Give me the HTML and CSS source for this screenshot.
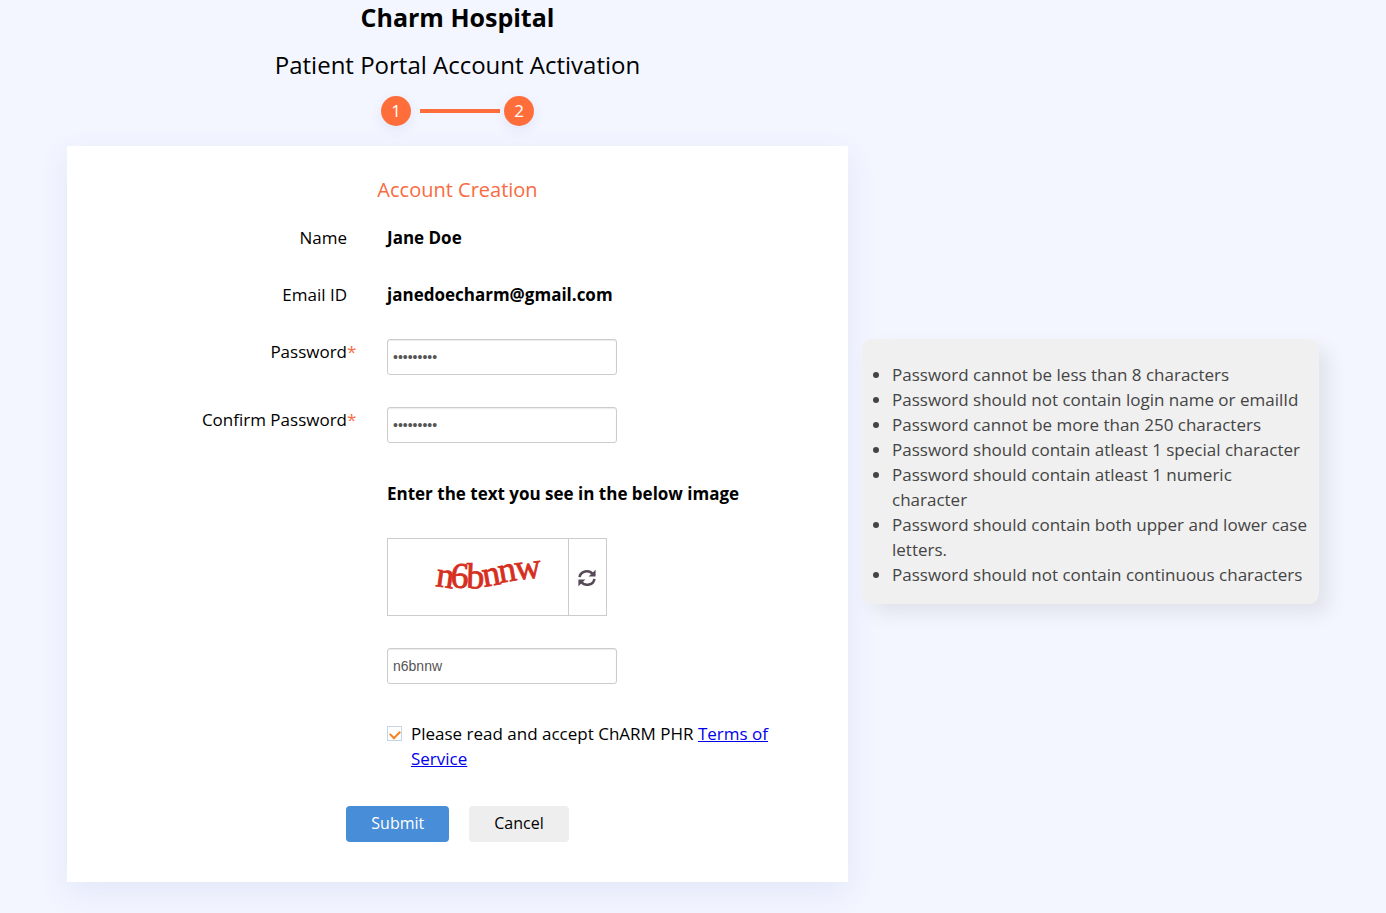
FILE: index.html
```html
<!DOCTYPE html>
<html lang="en">
<head>
  <meta charset="UTF-8">
  <meta name="viewport" content="width=device-width, initial-scale=1.0">
  <title>Patient Portal Account Activation</title>
  <link rel="stylesheet" href="styles.css">
</head>
<body>
  <div class="container">
    <main class="activation">
      <h1>Charm Hospital</h1>
      <h2>Patient Portal Account Activation</h2>
      <div class="steps">
        <span class="step">1</span>
        <span class="step-line"></span>
        <span class="step">2</span>
      </div>

      <form class="card">
        <h3>Account Creation</h3>
        <div class="row">
          <span class="label">Name<span class="mark"></span></span>
          <strong>Jane Doe</strong>
        </div>
        <div class="row">
          <span class="label">Email ID<span class="mark"></span></span>
          <strong>janedoecharm@gmail.com</strong>
        </div>
        <div class="row">
          <label class="label" for="password">Password<span class="mark">*</span></label>
          <input class="text-box" type="password" id="password" value="Charm@123">
        </div>
        <div class="row">
          <label class="label" for="confirm-password">Confirm Password<span class="mark">*</span></label>
          <input class="text-box" type="password" id="confirm-password" value="Charm@123">
        </div>
        <div class="row">
          <label class="field caption" for="captcha-text">Enter the text you see in the below image</label>
        </div>
        <div class="row">
          <div class="field captcha">
            <svg class="captcha-image" width="180" height="76" viewBox="0 0 180 76" role="img" aria-label="n6bnnw">
              <text x="47 62 78 96 112 128" y="47 48 49 48 44 41" rotate="8 4 2 -10 -10 -6">n6bnnw</text>
            </svg>
            <button class="refresh" type="button" aria-label="Refresh image">
              <svg width="18" height="18" viewBox="0 0 18 18">
                <path class="arc" d="M1.6 8.2A7.2 6.6 0 0 1 14.6 5M16.4 9.8A7.2 6.6 0 0 1 3.4 13"/>
                <path class="head" d="M17.6 0.8V7.6H10.6zM0.4 17.2V10.4H7.4z"/>
              </svg>
            </button>
          </div>
        </div>
        <div class="row">
          <input class="field text-box" type="text" id="captcha-text" value="n6bnnw">
        </div>
        <div class="row">
          <div class="field terms">
            <input type="checkbox" id="terms" checked>
            <label for="terms">Please read and accept ChARM PHR <a href="#">Terms of Service</a></label>
          </div>
        </div>
        <div class="buttons">
          <button class="btn submit" type="submit">Submit</button>
          <button class="btn cancel" type="button">Cancel</button>
        </div>
      </form>
    </main>

    <aside class="rules">
      <ul>
        <li>Password cannot be less than 8 characters</li>
        <li>Password should not contain login name or emailId</li>
        <li>Password cannot be more than 250 characters</li>
        <li>Password should contain atleast 1 special character</li>
        <li>Password should contain atleast 1 numeric character</li>
        <li>Password should contain both upper and lower case letters.</li>
        <li>Password should not contain continuous characters</li>
      </ul>
    </aside>
  </div>
</body>
</html>
```
FILE: styles.css
```css
* {
  box-sizing: border-box;
}
body {
  margin: 0;
  background-color: #f3f6ff;
  color: #000;
  font-family: "Open Sans", sans-serif;
  font-size: 17px;
  line-height: 25px;
}
.container {
  display: grid;
  grid-template-columns: minmax(600px, 781px) minmax(300px, 457px);
  column-gap: 14px;
  align-items: start;
  padding: 0 20px 31px 67px;
}
h1,
h2,
h3 {
  margin: 0;
  text-align: center;
  font-weight: 400;
}
h1 {
  font-size: 25px;
  line-height: 34px;
  font-weight: 700;
}
h2 {
  margin-top: 13px;
  font-size: 24px;
  line-height: 36px;
}
.steps {
  display: flex;
  justify-content: center;
  align-items: center;
  margin: 13px 0 20px;
}
.step {
  width: 30px;
  height: 30px;
  border-radius: 50%;
  background-color: #ff6e3a;
  box-shadow: 0 4px 12px rgba(80, 80, 200, 0.1);
  color: #fff;
  line-height: 30px;
  text-align: center;
}
.step-line {
  width: 80px;
  height: 4px;
  margin: 0 4px 0 9px;
  background-color: #ff6e3a;
}
.card {
  padding: 29px 40px 40px 0;
  background-color: #fff;
  box-shadow: 0 10px 30px rgba(70, 80, 180, 0.09);
}
h3 {
  margin: 0 -40px 20px 0;
  color: #f96b3f;
  font-size: 20px;
  line-height: 30px;
}
.row {
  display: grid;
  grid-template-columns: 320px 1fr;
  margin-bottom: 32px;
}
.label {
  display: flex;
  justify-content: flex-end;
  padding-right: 30px;
}
.mark {
  width: 10px;
  color: #f96b3f;
}
.field {
  grid-column: 2;
}
.text-box {
  width: 230px;
  height: 36px;
  padding: 0 5px;
  border: 1px solid #ccc;
  border-radius: 3px;
  box-shadow: inset 0 1px 1px rgba(0, 0, 0, 0.08);
  color: #555;
  font-family: "Liberation Sans", sans-serif;
  font-size: 14px;
}
.caption {
  padding-top: 6px;
  font-weight: 700;
}
.captcha {
  display: flex;
  width: 220px;
  height: 78px;
  border: 1px solid #ccc;
}
.captcha-image {
  flex: none;
}
.captcha-image text {
  fill: #d62f20;
  stroke: #d62f20;
  stroke-width: 0.8;
  font-family: "Liberation Serif", serif;
  font-size: 36px;
}
.refresh {
  display: flex;
  flex: 1;
  justify-content: center;
  align-items: center;
  padding: 2px 2px 0 0;
  border: none;
  border-left: 1px solid #ccc;
  background: none;
  cursor: pointer;
}
.refresh .arc {
  fill: none;
  stroke: #564a58;
  stroke-width: 2.6;
}
.refresh .head {
  fill: #564a58;
}
.terms {
  display: flex;
  align-items: flex-start;
  gap: 9px;
  padding: 5px 0 3px;
}
.terms input {
  flex: none;
  width: 15px;
  height: 15px;
  margin: 5px 0 0;
  border: 1px solid #c3d5e6;
  background-color: #fff;
  appearance: none;
}
.terms input:checked::before {
  content: "";
  display: block;
  width: 8px;
  height: 5px;
  margin: 3px 2px;
  border: solid #f58220;
  border-width: 0 0 2px 2px;
  transform: rotate(-45deg);
}
.terms a {
  color: #0000ee;
}
.buttons {
  display: flex;
  justify-content: center;
  gap: 20px;
  margin-right: -40px;
}
.btn {
  height: 36px;
  padding: 0 25px 2px;
  border: none;
  border-radius: 4px;
  font-family: inherit;
  font-size: 16px;
  cursor: pointer;
}
.submit {
  background-color: #488dd8;
  color: #fff;
}
.cancel {
  background-color: #eee;
  color: #000;
}
.rules {
  margin-top: 339px;
  padding: 23px 10px 17px 0;
  border-radius: 10px;
  background-color: #f0f0f0;
  box-shadow: 10px 10px 20px rgba(0, 0, 0, 0.08);
  color: #444;
}
.rules ul {
  margin: 0;
  padding-left: 30px;
}
```
